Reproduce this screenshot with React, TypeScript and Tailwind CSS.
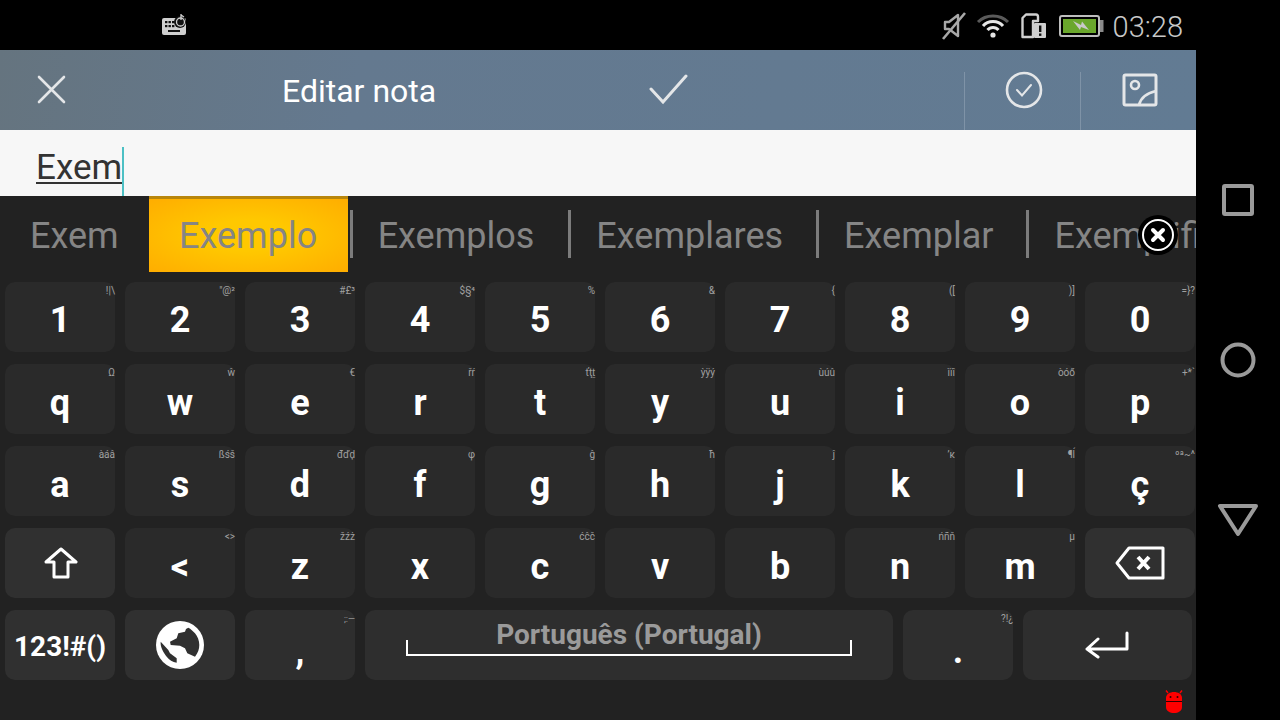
import React from "react";

const roboto = "font-['Roboto',sans-serif]";

type K = { k: string; s?: string };

const rows: K[][] = [
  [{ k: "1", s: "!|\\" }, { k: "2", s: "\"@²" }, { k: "3", s: "#£³" }, { k: "4", s: "$§⁴" }, { k: "5", s: "%" }, { k: "6", s: "&" }, { k: "7", s: "{" }, { k: "8", s: "([" }, { k: "9", s: ")]" }, { k: "0", s: "=}?" }],
  [{ k: "q", s: "Ω" }, { k: "w", s: "ŵ" }, { k: "e", s: "€" }, { k: "r", s: "řŕ" }, { k: "t", s: "ťţṯ" }, { k: "y", s: "ỳÿý" }, { k: "u", s: "ùúû" }, { k: "i", s: "ìïî" }, { k: "o", s: "òóő" }, { k: "p", s: "+*`" }],
  [{ k: "a", s: "àáâ" }, { k: "s", s: "ßśš" }, { k: "d", s: "đďḑ" }, { k: "f", s: "φ" }, { k: "g", s: "ĝ" }, { k: "h", s: "ħ" }, { k: "j", s: "ĵ" }, { k: "k", s: "ʼĸ" }, { k: "l", s: "¶ĺ" }, { k: "ç", s: "ºª~^" }],
];

function Key({ k, s, digit }: K & { digit?: boolean }) {
  return (
    <div className="relative flex h-[70px] w-[110px] shrink-0 items-center justify-center rounded-[10px] bg-[#2a2a2a]">
      <span className="absolute right-0 top-[2px] text-[10px] leading-[14px] text-[#a0a0a0]">{s}</span>
      <span className={`${digit ? "pt-[6px]" : "pt-[7px]"} text-[36px] font-bold leading-[40px] text-white`}>{k}</span>
    </div>
  );
}

function Divider() {
  return <div className="h-[48px] w-[3px] shrink-0 bg-[#7c7c7c]" />;
}

function Nav() {
  return (
    <div className="flex w-[84px] shrink-0 flex-col items-center justify-center gap-[125px] bg-black">
      <svg width="34" height="34" viewBox="0 0 34 34" fill="none" stroke="#9a9a9a" strokeWidth="4" strokeLinejoin="round">
        <rect x="3" y="3" width="28" height="28" rx="1" />
      </svg>
      <svg width="36" height="36" viewBox="0 0 36 36" fill="none" stroke="#9a9a9a" strokeWidth="4">
        <circle cx="18" cy="18" r="15.5" />
      </svg>
      <svg width="42" height="34" viewBox="0 0 42 34" fill="none" stroke="#9a9a9a" strokeWidth="4" strokeLinejoin="round">
        <path d="M3 3 H39 L21 31 Z" />
      </svg>
    </div>
  );
}

function StatusBar() {
  return (
    <div className="flex h-[50px] items-center bg-black pl-[162px] pr-[13px]">
      <svg width="26" height="22" viewBox="0 0 26 22" className="-mt-[1px]">
        <rect x="0" y="4" width="24" height="17" rx="2" fill="#cfcfcf" />
        <g fill="#111">
          <rect x="3" y="7" width="2.4" height="2.2" /><rect x="6.5" y="7" width="2.4" height="2.2" /><rect x="10" y="7" width="2.4" height="2.2" />
          <rect x="3" y="11" width="2.4" height="2.2" /><rect x="6.5" y="11" width="2.4" height="2.2" /><rect x="10" y="11" width="2.4" height="2.2" />
          <rect x="6" y="16" width="12" height="2" />
          <circle cx="18" cy="8" r="6" />
        </g>
        <circle cx="18.5" cy="8" r="4" fill="none" stroke="#cfcfcf" strokeWidth="1.3" />
        <path d="M19 0 V6 M19 1 L22 3" stroke="#cfcfcf" strokeWidth="1.3" fill="none" />
      </svg>
      <div className="ml-auto mt-[2px] flex items-center">
        <svg width="26" height="28" viewBox="0 0 26 28" fill="none" stroke="#a8a8a8" strokeWidth="2.4">
          <path d="M4 10 H8 L17 3 V24 L8 17 H4 Z" strokeLinejoin="round" />
          <path d="M24 1 L2 27" strokeWidth="2.6" />
        </svg>
        <svg width="34" height="26" viewBox="0 0 34 26" fill="none" className="ml-[9px]">
          <path d="M2 9 C10 1 24 1 32 9" stroke="#5a5a5a" strokeWidth="3" />
          <path d="M7 13 C12 7 22 7 27 13" stroke="#e6e6e6" strokeWidth="3" />
          <path d="M11.5 17 C14.5 13.5 19.5 13.5 22.5 17" stroke="#e6e6e6" strokeWidth="3" />
          <circle cx="17" cy="22" r="2.6" fill="#e6e6e6" />
        </svg>
        <svg width="26" height="26" viewBox="0 0 26 26" className="ml-[11px]">
          <path d="M1.5 5 L5 1.5 H15 Q17 1.5 17 4 V8 H12 V24 H1.5 Z" fill="none" stroke="#cfcfcf" strokeWidth="2.4" strokeLinejoin="round" />
          <rect x="13" y="10" width="12" height="15" rx="1" fill="#cfcfcf" />
          <rect x="18" y="12.5" width="2.4" height="6.5" fill="#111" />
          <rect x="18" y="20.5" width="2.4" height="2.4" fill="#111" />
        </svg>
        <svg width="46" height="22" viewBox="0 0 46 22" className="ml-[12px]">
          <rect x="1" y="1" width="39" height="20" rx="2" fill="none" stroke="#bdbdbd" strokeWidth="2" />
          <rect x="41" y="5" width="3.5" height="12" fill="#8a8a8a" />
          <rect x="4" y="4" width="33" height="14" fill="#6aa72c" />
          <path d="M14 6 L22 10 L23 6.5 L30 15 L22 12 L21 15 Z" fill="#c9c9c9" />
        </svg>
        <span className={`${roboto} ml-[8px] mt-[2px] text-[29px] font-light leading-[34px] text-[#c8c8c8]`}>03:28</span>
      </div>
    </div>
  );
}

function Toolbar() {
  return (
    <div className="flex h-[80px] bg-[linear-gradient(100deg,#65747f_0%,#64798f_30%,#627b93_100%)]">
      <div className="flex flex-1 items-center pl-[37px]">
        <svg width="29" height="29" viewBox="0 0 29 29" fill="none" stroke="#e4e6e8" strokeWidth="2.6" strokeLinecap="round" className="-mt-[2px]">
          <path d="M2 2 L27 27 M27 2 L2 27" />
        </svg>
        <span className={`${roboto} ml-[216px] mt-[2px] text-[32px] leading-[40px] text-white`}>Editar nota</span>
        <svg width="39" height="31" viewBox="0 0 39 31" fill="none" stroke="#e4e6e8" strokeWidth="3" strokeLinecap="round" className="ml-[213px] -mt-[1px]">
          <path d="M2 15 L14 28 L37 2" />
        </svg>
      </div>
      <div className="mt-[22px] flex w-[116px] items-center justify-center border-l border-[#7f93a7]">
        <svg width="38" height="38" viewBox="0 0 38 38" fill="none" stroke="#e4e6e8" className="-mt-[22px] ml-[2px]">
          <circle cx="19" cy="19" r="17" strokeWidth="2.6" />
          <path d="M12 19 L17 24.5 L26 14" strokeWidth="2" strokeLinecap="round" />
        </svg>
      </div>
      <div className="mt-[22px] flex w-[116px] items-center justify-center border-l border-[#7f93a7]">
        <svg width="36" height="34" viewBox="0 0 36 34" fill="none" stroke="#e4e6e8" strokeWidth="3" className="-mt-[22px] ml-[2px]">
          <rect x="2" y="2" width="32" height="30" rx="1.5" />
          <circle cx="13" cy="12" r="4" strokeWidth="2.6" />
          <path d="M17 32 C19 24 25 20 34 18" strokeWidth="2.8" />
        </svg>
      </div>
    </div>
  );
}

function Editor() {
  return (
    <div className="flex h-[66px] items-end bg-[#f7f7f7] pl-[36px]">
      <div className="mb-[12px] w-[86px] border-b-2 border-[#333] text-[35px] leading-[28px] text-[#333]">
        <span className={roboto}>Exem</span>
      </div>
      <div className="h-[49px] w-[2px] bg-[#4cc0c4]" />
    </div>
  );
}

function Suggestions() {
  const text = "text-[36px] leading-[40px] text-[#858585]";
  return (
    <div className="relative flex h-[76px] items-center overflow-hidden">
      <span className={`${text} ml-[30px] mt-[3px]`}>Exem</span>
      <div className="ml-[30px] flex h-[76px] w-[199px] shrink-0 items-center justify-center border-t-[3px] border-[#b8860b] bg-[radial-gradient(ellipse_at_center,#ffc800_30%,#ffad00_100%)]">
        <span className={text}>Exemplo</span>
      </div>
      <div className="ml-[2px]"><Divider /></div>
      <span className={`${text} ml-[25px] mt-[3px]`}>Exemplos</span>
      <div className="ml-[34px]"><Divider /></div>
      <span className={`${text} ml-[25px] mt-[3px]`}>Exemplares</span>
      <div className="ml-[33px]"><Divider /></div>
      <span className={`${text} ml-[25px] mt-[3px]`}>Exemplar</span>
      <div className="ml-[33px]"><Divider /></div>
      <span className={`${text} ml-[25px] mt-[3px] whitespace-nowrap`}>Exemplificar</span>
      <div className="absolute left-[1138px] top-[19px] flex h-[40px] w-[40px] items-center justify-center rounded-full bg-black">
        <svg width="34" height="34" viewBox="0 0 34 34" fill="none" stroke="#fff">
          <circle cx="17" cy="17" r="15" strokeWidth="2" />
          <path d="M12 12 L22 22 M22 12 L12 22" strokeWidth="4" strokeLinecap="round" />
        </svg>
      </div>
    </div>
  );
}

function Keyboard() {
  const special = "flex h-[70px] items-center justify-center rounded-[10px] bg-[#303030]";
  return (
    <div className={`${roboto} relative flex flex-1 flex-col bg-[#222]`}>
      <Suggestions />
      <div className="flex flex-col gap-[12px] pl-[5px] pt-[10px]">
        {rows.map((r, i) => (
          <div key={i} className="flex gap-[10px]">
            {r.map((c) => <Key key={c.k} {...c} digit={i === 0} />)}
          </div>
        ))}
        <div className="flex gap-[10px]">
          <div className={`${special} w-[110px] shrink-0`}>
            <svg width="34" height="32" viewBox="0 0 34 32" fill="none" stroke="#fff" strokeWidth="3" strokeLinejoin="round" className="ml-[1px]">
              <path d="M17 2 L32 15 H24 V30 H10 V15 H2 Z" />
            </svg>
          </div>
          <Key k="<" s="<>" />
          <Key k="z" s="žźż" />
          <Key k="x" />
          <Key k="c" s="ćĉč" />
          <Key k="v" />
          <Key k="b" />
          <Key k="n" s="ńñň" />
          <Key k="m" s="µ" />
          <div className={`${special} w-[110px] shrink-0`}>
            <svg width="50" height="34" viewBox="0 0 50 34" fill="none" stroke="#fff" strokeWidth="3" strokeLinejoin="round">
              <path d="M14 2 H48 V32 H14 L2 17 Z" />
              <path d="M23 11 L34 23 M34 11 L23 23" strokeWidth="4" />
            </svg>
          </div>
        </div>
        <div className="flex gap-[10px]">
          <div className={`${special} w-[110px] shrink-0 pt-[4px] text-[28px] font-bold text-white`}>123!#()</div>
          <div className={`${special} w-[110px] shrink-0`}>
            <svg width="50" height="50" viewBox="0 0 50 50">
              <circle cx="25" cy="25" r="24" fill="#fff" />
              <path d="M31 9 L30 11.7 L23.3 13.3 L21.7 18.3 L15 21.7 L15.7 25 L25 25.7 L30 28.3 L32.3 33.3 L40 36.7 C43 33 44.3 29 44.3 25 C44.3 20.5 42.5 16.5 40 13.3 C38 11 35.8 9 33.3 7.7 Z" fill="#303030" />
              <path d="M5.7 21.7 L13.3 30 L15 33.3 L21.7 38.3 L21.7 42.7 C17.5 42 14.3 39.8 11.7 36.7 C8.7 32.8 5 27 5.7 21.7 Z" fill="#303030" />
            </svg>
          </div>
          <div className="relative flex h-[70px] w-[110px] shrink-0 items-center justify-center rounded-[10px] bg-[#2e2e2e]">
            <span className="absolute right-0 top-[2px] text-[9px] leading-[14px] text-[#a0a0a0]">;:—</span>
            <span className="pt-[11px] text-[36px] font-bold leading-[40px] text-white">,</span>
          </div>
          <div className="flex h-[70px] w-[528px] shrink-0 flex-col items-center rounded-[10px] bg-[#2e2e2e] pt-[8px]">
            <span className="text-[28px] font-bold leading-[34px] text-[#9a9a9a]">Português (Portugal)</span>
            <div className="-mt-[12px] h-[16px] w-[446px] border-x-2 border-b-2 border-white" />
          </div>
          <div className="relative flex h-[70px] w-[110px] shrink-0 items-center justify-center rounded-[10px] bg-[#2e2e2e]">
            <span className="absolute right-0 top-[2px] text-[10px] leading-[14px] text-[#a0a0a0]">?!¿</span>
            <span className="pt-[11px] text-[36px] font-bold leading-[40px] text-white">.</span>
          </div>
          <div className="flex h-[70px] w-[169px] shrink-0 items-center justify-center rounded-[10px] bg-[#2e2e2e]">
            <svg width="44" height="28" viewBox="0 0 44 28" fill="none" stroke="#fff" strokeWidth="3" strokeLinecap="round" strokeLinejoin="round" className="-ml-[2px]">
              <path d="M42 2 V18 H2 M13 8 L2 18 L13 26" />
            </svg>
          </div>
        </div>
      </div>
      <svg width="18" height="24" viewBox="0 0 18 24" className="absolute left-[1165px] top-[494px]">
        <path d="M1 8 C1 4 5 2 9 2 C13 2 17 4 17 8 V17 C17 21 13 23 9 23 C5 23 1 21 1 17 Z" fill="#f00" />
        <path d="M3 3 L1 0.5 M15 3 L17 0.5" stroke="#f00" strokeWidth="1.4" />
        <rect x="1" y="11" width="16" height="1" fill="#300" />
        <circle cx="5.5" cy="7" r="1" fill="#300" /><circle cx="12.5" cy="7" r="1" fill="#300" />
      </svg>
    </div>
  );
}

export default function App() {
  return (
    <div className={`${roboto} flex h-[720px] w-[1280px] overflow-hidden bg-black`}>
      <div className="flex w-[1196px] shrink-0 flex-col">
        <StatusBar />
        <Toolbar />
        <Editor />
        <Keyboard />
      </div>
      <Nav />
    </div>
  );
}
